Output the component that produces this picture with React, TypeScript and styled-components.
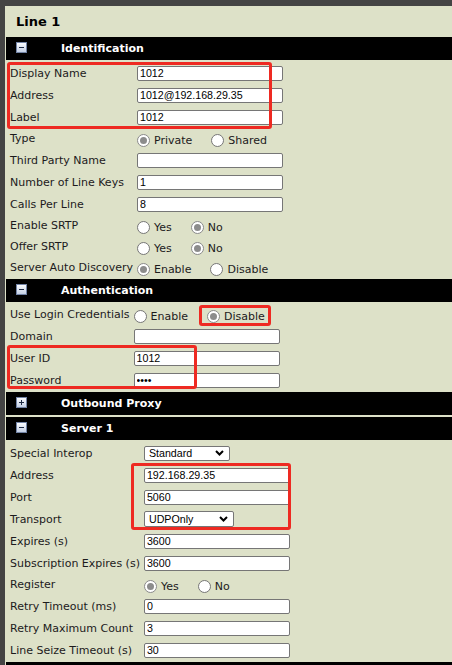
import React from "react";
import { createGlobalStyle, styled } from "styled-components";

const beige = "#dde1c8";
const frame = "#444444";
const annotation = "#ee2a22";

const GlobalCss = createGlobalStyle`
  html, body {
    margin: 0;
    padding: 0;
    overflow: hidden;
    background: ${beige};
    font-family: "DejaVu Sans", Verdana, sans-serif;
  }
`;

const Page = styled.div`
  position: relative;
  min-height: 665px;
  box-sizing: border-box;
  background: ${beige};
  border-top: 6px solid ${frame};
  border-left: 5px solid ${frame};
  padding-left: 1px;
`;

const Title = styled.h1`
  margin: 0;
  height: 31px;
  line-height: 31px;
  padding-left: 10px;
  font-size: 13px;
  font-weight: 700;
  color: #000;
`;

const Header = styled.div`
  display: flex;
  align-items: center;
  height: 23px;
  padding-left: 10px;
  background: #000;
  color: #fff;
  font-size: 11px;
  font-weight: 700;

  /* two collapsed bars in a row keep a thin gap */
  section:has(> &:only-child) + section > & {
    margin-top: 2px;
  }
`;

const Toggle = styled.span<{ $open: boolean }>`
  position: relative;
  width: 11px;
  height: 11px;
  box-sizing: border-box;
  margin-right: 34px;
  margin-top: -2px;
  border: 1px solid #7384a6;
  background: linear-gradient(#fbfcff, #c4d0e5);

  &::before,
  &::after {
    content: "";
    position: absolute;
    background: #1d2a44;
  }
  &::before {
    left: 2px;
    top: 4px;
    width: 5px;
    height: 1px;
  }
  &::after {
    display: ${(p) => (p.$open ? "none" : "block")};
    left: 4px;
    top: 2px;
    width: 1px;
    height: 5px;
  }
`;

const Rows = styled.div`
  display: grid;
  grid-template-columns: max-content 1fr;
  column-gap: 4px;
  padding: 2px 0 1px;
`;

const Label = styled.div<{ $short: boolean }>`
  display: flex;
  align-items: center;
  height: ${(p) => (p.$short ? 21 : 22)}px;
  padding-left: 4px;
  font-size: 11px;
  color: #1c1a1c;
  white-space: nowrap;
`;

const Cell = styled.div`
  display: flex;
  align-items: center;
`;

const TextBox = styled.input`
  width: 146px;
  height: 15px;
  box-sizing: border-box;
  margin: 0;
  padding: 0 2px;
  border: 1px solid #767676;
  border-radius: 2px;
  background: #fff;
  font-family: "Liberation Sans", Arial, sans-serif;
  font-size: 10.67px;
  color: #000;
  outline: none;
`;

const Select = styled.div<{ $w: number; $h: number }>`
  display: flex;
  align-items: center;
  justify-content: space-between;
  width: ${(p) => p.$w}px;
  height: ${(p) => p.$h}px;
  box-sizing: border-box;
  padding: 0 5px 0 4px;
  border: 1px solid #767676;
  border-radius: 2px;
  background: #fff;
  font-family: "Liberation Sans", Arial, sans-serif;
  font-size: 10.67px;
  color: #000;
`;

const RadioGroup = styled.div`
  display: flex;
  align-items: center;
  gap: 19px;
  padding-top: 3px;
`;

const RadioOption = styled.label`
  display: flex;
  align-items: center;
  gap: 4px;
  font-size: 11px;
  color: #1c1a1c;
`;

const RadioDot = styled.span<{ $on: boolean }>`
  position: relative;
  width: 13px;
  height: 13px;
  box-sizing: border-box;
  border-radius: 50%;
  border: 1px solid ${(p) => (p.$on ? "#8a8a8a" : "#767676")};
  background: #fff;

  &::after {
    content: "";
    display: ${(p) => (p.$on ? "block" : "none")};
    position: absolute;
    left: 2px;
    top: 2px;
    width: 7px;
    height: 7px;
    border-radius: 50%;
    background: #8c8c8c;
  }
`;

const RedMark = styled.div`
  position: absolute;
  box-sizing: border-box;
  border: 3px solid ${annotation};
  border-radius: 3px;
  pointer-events: none;
`;

type Field =
  | { label: string; kind: "text"; value: string; password?: boolean }
  | { label: string; kind: "radio"; options: string[]; on: number }
  | { label: string; kind: "select"; value: string; w: number; h: number };

function Chevron() {
  return (
    <svg width="9" height="6" viewBox="0 0 9 6">
      <polyline points="1,1 4.5,4.5 8,1" fill="none" stroke="#000" strokeWidth="2" />
    </svg>
  );
}

function Control({ f }: { f: Field }) {
  if (f.kind === "text")
    return <TextBox type={f.password ? "password" : "text"} readOnly defaultValue={f.value} />;
  if (f.kind === "select")
    return (
      <Select $w={f.w} $h={f.h}>
        <span>{f.value}</span>
        <Chevron />
      </Select>
    );
  return (
    <RadioGroup>
      {f.options.map((o, i) => (
        <RadioOption key={o}>
          <RadioDot $on={i === f.on} />
          {o}
        </RadioOption>
      ))}
    </RadioGroup>
  );
}

function Section({ title, fields }: { title: string; fields?: Field[] }) {
  return (
    <section>
      <Header>
        <Toggle $open={!!fields} />
        {title}
      </Header>
      {fields && (
        <Rows>
          {fields.map((f) => (
            <React.Fragment key={f.label}>
              <Label $short={f.kind === "radio"}>{f.label}</Label>
              <Cell>
                <Control f={f} />
              </Cell>
            </React.Fragment>
          ))}
        </Rows>
      )}
    </section>
  );
}

const identification: Field[] = [
  { label: "Display Name", kind: "text", value: "1012" },
  { label: "Address", kind: "text", value: "1012@192.168.29.35" },
  { label: "Label", kind: "text", value: "1012" },
  { label: "Type", kind: "radio", options: ["Private", "Shared"], on: 0 },
  { label: "Third Party Name", kind: "text", value: "" },
  { label: "Number of Line Keys", kind: "text", value: "1" },
  { label: "Calls Per Line", kind: "text", value: "8" },
  { label: "Enable SRTP", kind: "radio", options: ["Yes", "No"], on: 1 },
  { label: "Offer SRTP", kind: "radio", options: ["Yes", "No"], on: 1 },
  { label: "Server Auto Discovery", kind: "radio", options: ["Enable", "Disable"], on: 0 },
];

const authentication: Field[] = [
  { label: "Use Login Credentials", kind: "radio", options: ["Enable", "Disable"], on: 1 },
  { label: "Domain", kind: "text", value: "" },
  { label: "User ID", kind: "text", value: "1012" },
  { label: "Password", kind: "text", value: "1012", password: true },
];

const server: Field[] = [
  { label: "Special Interop", kind: "select", value: "Standard", w: 86, h: 15 },
  { label: "Address", kind: "text", value: "192.168.29.35" },
  { label: "Port", kind: "text", value: "5060" },
  { label: "Transport", kind: "select", value: "UDPOnly", w: 90, h: 16 },
  { label: "Expires (s)", kind: "text", value: "3600" },
  { label: "Subscription Expires (s)", kind: "text", value: "3600" },
  { label: "Register", kind: "radio", options: ["Yes", "No"], on: 0 },
  { label: "Retry Timeout (ms)", kind: "text", value: "0" },
  { label: "Retry Maximum Count", kind: "text", value: "3" },
  { label: "Line Seize Timeout (s)", kind: "text", value: "30" },
];

export default function App() {
  return (
    <Page>
      <GlobalCss />
      <Title>Line 1</Title>
      <Section title="Identification" fields={identification} />
      <Section title="Authentication" fields={authentication} />
      <Section title="Outbound Proxy" />
      <Section title="Server 1" fields={server} />
      <Section title="Server 2" />

      <RedMark style={{ left: 2, top: 56, width: 265, height: 67 }} />
      <RedMark style={{ left: 194, top: 299, width: 72, height: 21 }} />
      <RedMark style={{ left: 2, top: 339, width: 190, height: 44 }} />
      <RedMark style={{ left: 126, top: 457, width: 160, height: 67 }} />
    </Page>
  );
}
